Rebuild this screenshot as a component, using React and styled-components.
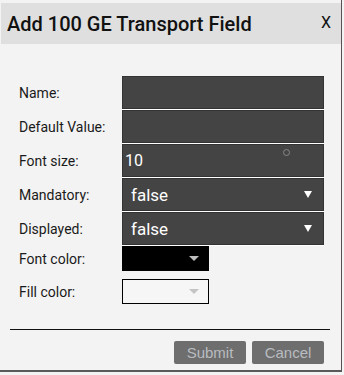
import React from "react";
import styled, { createGlobalStyle } from "styled-components";

const Global = createGlobalStyle`
  html, body { margin: 0; padding: 0; background: #f3f3f3; }
  body { font-family: Roboto, "Liberation Sans", sans-serif; }
`;

const Dialog = styled.div`
  width: 342px;
  height: 372px;
  background: #f3f3f3;
  border-right: 1px solid #5c5050;
  border-bottom: 2px solid #5a5a5a;
  padding-top: 3px;
  box-sizing: border-box;
  display: flex;
  flex-direction: column;
`;

const Header = styled.div`
  margin-left: 1px;
  height: 41px;
  background: #dfdfdf;
  display: flex;
  align-items: center;
  justify-content: space-between;
  padding: 0 10px 0 6px;
`;

const Title = styled.h1`
  margin: 0;
  font-size: 20px;
  font-weight: 500;
  color: #111;
`;

const Close = styled.span`
  font-size: 16px;
  color: #111;
  margin-top: -3px;
`;

const Form = styled.div`
  display: grid;
  grid-template-columns: 103px 202px;
  row-gap: 1px;
  padding: 32px 0 0 19px;
`;

const Label = styled.label`
  font-size: 14px;
  color: #1a1a1a;
  display: flex;
  align-items: center;
  margin-top: ${(p) => p.$mt || 0}px;
`;

const Field = styled.div`
  position: relative;
  height: 33px;
  box-sizing: border-box;
  background: #444;
  border: 1px solid #333;
  box-shadow: 0 1px 0 #fff;
  display: flex;
  align-items: center;
  justify-content: space-between;
  color: #fff;
  padding: 0 ${(p) => (p.$select ? 11 : 2)}px 0 ${(p) => (p.$select ? 8 : 2)}px;
  font-size: ${(p) => (p.$select ? 17 : 16)}px;
`;

const Spinner = styled.span`
  position: absolute;
  left: 160px;
  top: 4px;
  width: 5px;
  height: 5px;
  border: 1px solid #888;
  border-radius: 50%;
`;

const Arrow = styled.span`
  width: 0;
  height: 0;
  border-left: 4px solid transparent;
  border-right: 4px solid transparent;
  border-top: 7px solid ${(p) => p.$color || "#fff"};
`;

const Swatch = styled.div`
  width: 87px;
  height: 25px;
  box-sizing: border-box;
  background: ${(p) => p.$bg};
  border: 1px solid #000;
  display: flex;
  align-items: center;
  justify-content: flex-end;
  padding-right: 9px;
  margin-top: ${(p) => p.$mt || 0}px;
`;

const SmallArrow = styled.span`
  width: 0;
  height: 0;
  border-left: 5px solid transparent;
  border-right: 5px solid transparent;
  border-top: 5px solid ${(p) => p.$color};
`;

const Rule = styled.hr`
  margin: 25px 11px 0 10px;
  border: none;
  border-top: 1px solid #111;
  height: 0;
`;

const Buttons = styled.div`
  display: flex;
  justify-content: flex-end;
  gap: 6px;
  padding: 11px 17px 0 0;
`;

const Button = styled.button`
  width: 72px;
  height: 23px;
  background: #6e6e6e;
  color: #b9bcc0;
  border: none;
  border-radius: 2px;
  font-family: "Liberation Sans", Arial, sans-serif;
  font-size: 15px;
  padding: 0;
`;

export default function App() {
  return (
    <>
      <Global />
      <Dialog>
        <Header>
          <Title>Add 100 GE Transport Field</Title>
          <Close>X</Close>
        </Header>
        <Form>
          <Label>Name:</Label>
          <Field />
          <Label>Default Value:</Label>
          <Field />
          <Label>Font size:</Label>
          <Field>
            10
            <Spinner />
          </Field>
          <Label>Mandatory:</Label>
          <Field $select>
            false
            <Arrow />
          </Field>
          <Label>Displayed:</Label>
          <Field $select>
            false
            <Arrow />
          </Field>
          <Label>Font color:</Label>
          <Swatch $bg="#000">
            <SmallArrow $color="#bdbdbd" />
          </Swatch>
          <Label $mt={7}>Fill color:</Label>
          <Swatch $bg="#f6f6f6" $mt={7}>
            <SmallArrow $color="#c4c4c4" />
          </Swatch>
        </Form>
        <Rule />
        <Buttons>
          <Button>Submit</Button>
          <Button>Cancel</Button>
        </Buttons>
      </Dialog>
    </>
  );
}
